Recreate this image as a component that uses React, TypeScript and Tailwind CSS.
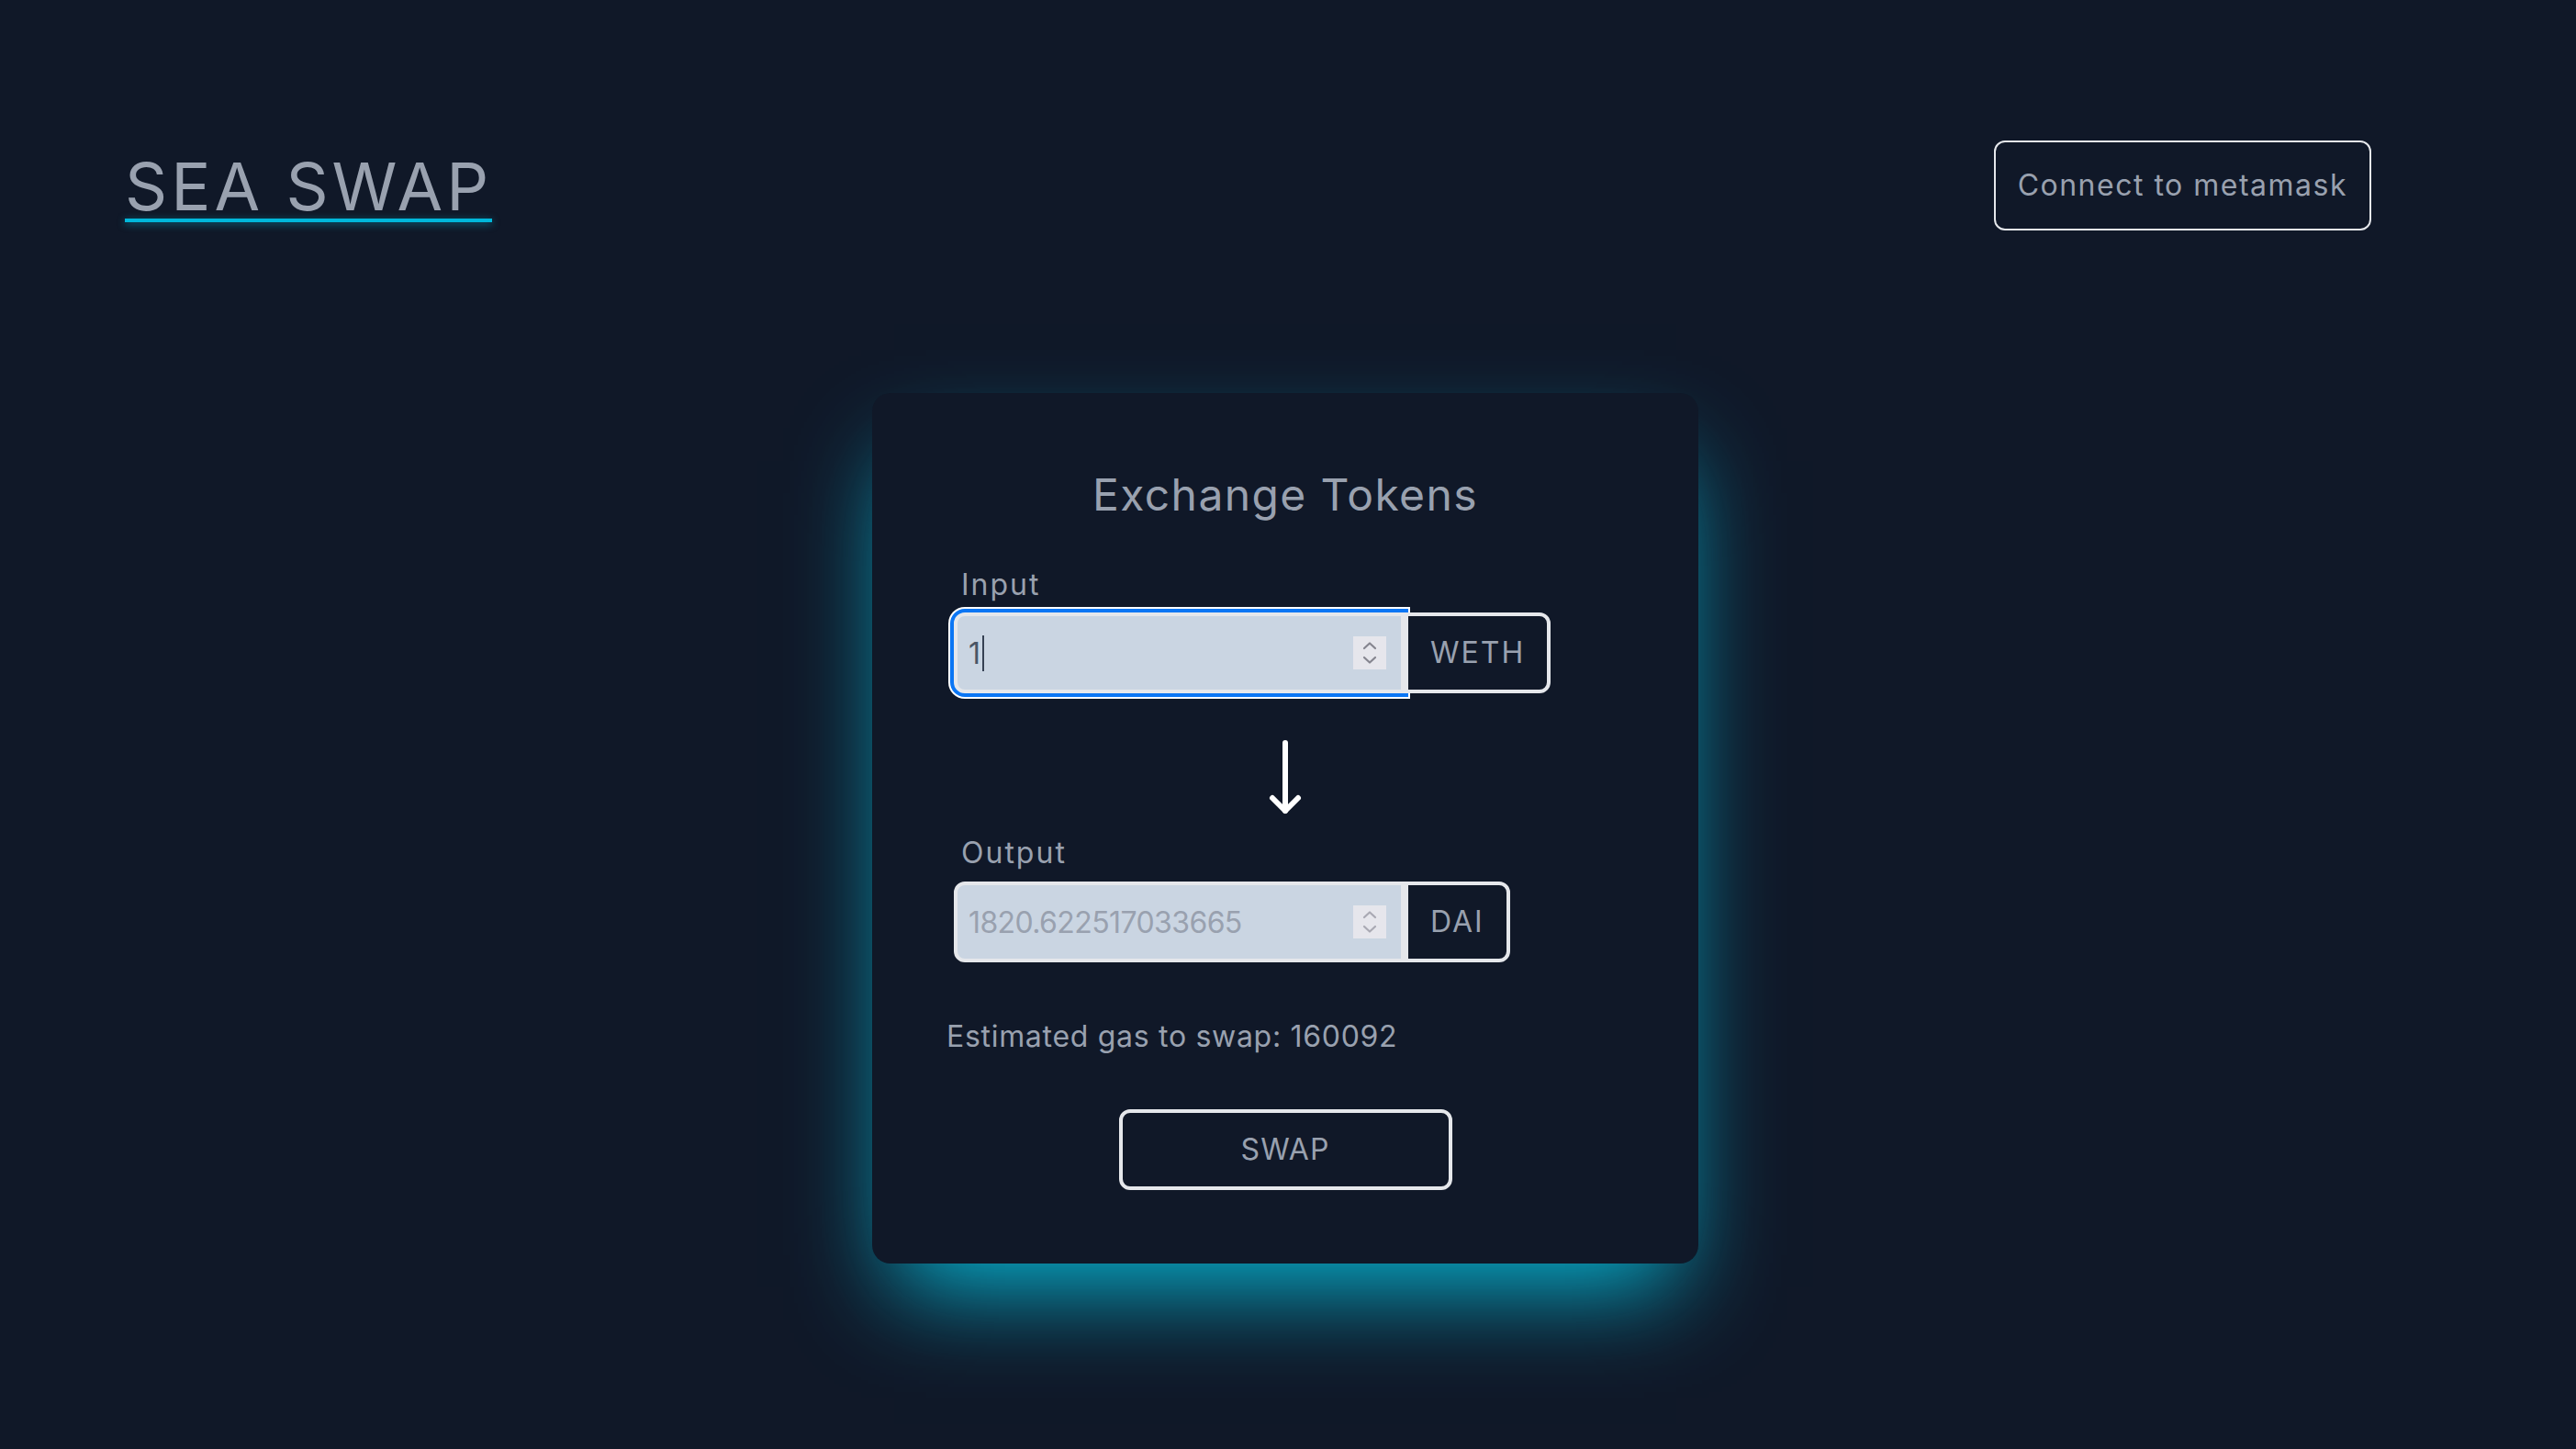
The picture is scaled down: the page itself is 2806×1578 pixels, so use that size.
import React, { useState } from 'react';

// Small up/down stepper drawn over the number fields
function Stepper({ faded }: { faded?: boolean }) {
  return (
    <span className="pointer-events-none absolute right-[20px] top-1/2 h-[36px] w-[36px] -translate-y-1/2 bg-[#e6e6ec]">
      <svg
        width="36"
        height="36"
        viewBox="0 0 36 36"
        fill="none"
        stroke={faded ? '#a9a9b3' : '#85858f'}
        strokeWidth="2.2"
        strokeLinecap="round"
        strokeLinejoin="round"
      >
        <path d="M12 13 L18 7.5 L24 13" />
        <path d="M12 23 L18 28.5 L24 23" />
      </svg>
    </span>
  );
}

export default function App(): JSX.Element {
  const [amountIn, setAmountIn] = useState<string>('1');
  const amountOut = '1820.622517033665';
  const estimatedGas = 160092;

  return (
    <div className="min-h-screen bg-gray-900 font-[Inter,'Liberation_Sans',sans-serif] text-gray-400">
      {/* Header */}
      <header className="flex items-start justify-between pl-[136px] pr-[223px] pt-[153px]">
        <div className="mt-[15px]">
          <h1 className="text-[72px] font-normal leading-[70px] tracking-[4px]">SEA SWAP</h1>
          <div className="h-[4px] bg-cyan-500 shadow-[0_2px_8px_rgba(6,182,212,0.6)]" />
        </div>
        <button className="rounded-[12px] border-2 border-gray-200 px-6 py-[31px] text-[32px] leading-[32px] tracking-[1.5px]">
          Connect to metamask
        </button>
      </header>

      {/* Swap card */}
      <main className="flex justify-center pr-[6px] pt-[177px] pb-[150px]">
        <section className="flex w-[900px] flex-col rounded-[20px] bg-gray-900 pt-[87px] pb-[80px] shadow-[0_50px_100px_-24px_#06b6d4]">
          <h2 className="text-center text-[48px] font-normal leading-[48px] tracking-[1.4px]">
            Exchange Tokens
          </h2>

          <label className="ml-[97px] mt-[58px] text-[32px] leading-[32px] tracking-[2px]">Input</label>
          <div className="ml-[89px] mt-[14px] flex">
            <div className="relative">
              <input
                type="text"
                value={amountIn}
                onChange={(e) => setAmountIn(e.target.value)}
                className="h-[88px] w-[491px] rounded-l-[12px] border-4 border-gray-200 bg-slate-300 px-3 text-[32px] text-gray-600 shadow-[0_0_0_6px_#ffffff] outline-4 outline-[#0b76f4]"
              />
              <span className="pointer-events-none absolute left-[31px] top-[25px] h-[39px] w-[2px] bg-gray-700" />
              <Stepper />
            </div>
            <div className="relative flex h-[88px] items-center rounded-r-[12px] border-4 border-gray-200 bg-gray-900 px-6 text-[32px] leading-[32px] tracking-[2px]">
              WETH
            </div>
          </div>

          <svg
            className="mt-[47px] self-center"
            width="44"
            height="90"
            viewBox="0 0 44 90"
            fill="none"
            stroke="#ffffff"
            strokeWidth="6"
            strokeLinecap="round"
            strokeLinejoin="round"
          >
            <path d="M22 7 V81" />
            <path d="M8 67 L22 81 L36 67" />
          </svg>

          <label className="ml-[97px] mt-[21px] text-[32px] leading-[32px] tracking-[2px]">Output</label>
          <div className="ml-[89px] mt-[15px] flex">
            <div className="relative">
              <input
                type="text"
                value={amountOut}
                readOnly
                className="h-[88px] w-[491px] rounded-l-[12px] border-4 border-gray-200 bg-slate-300 px-3 text-[32px] tracking-[-0.6px] text-gray-400 outline-none"
              />
              <Stepper faded />
            </div>
            <div className="relative flex h-[88px] items-center rounded-r-[12px] border-4 border-gray-200 bg-gray-900 px-6 text-[32px] leading-[32px] tracking-[2px]">
              DAI
            </div>
          </div>

          <p className="ml-[81px] mt-[65px] text-[32px] leading-[32px] tracking-[0.7px]">
            Estimated gas to swap: {estimatedGas}
          </p>

          <button className="mt-[63px] h-[88px] w-[363px] self-center rounded-[12px] border-4 border-gray-200 text-[32px] leading-[32px] tracking-[1px]">
            SWAP
          </button>
        </section>
      </main>
    </div>
  );
}
